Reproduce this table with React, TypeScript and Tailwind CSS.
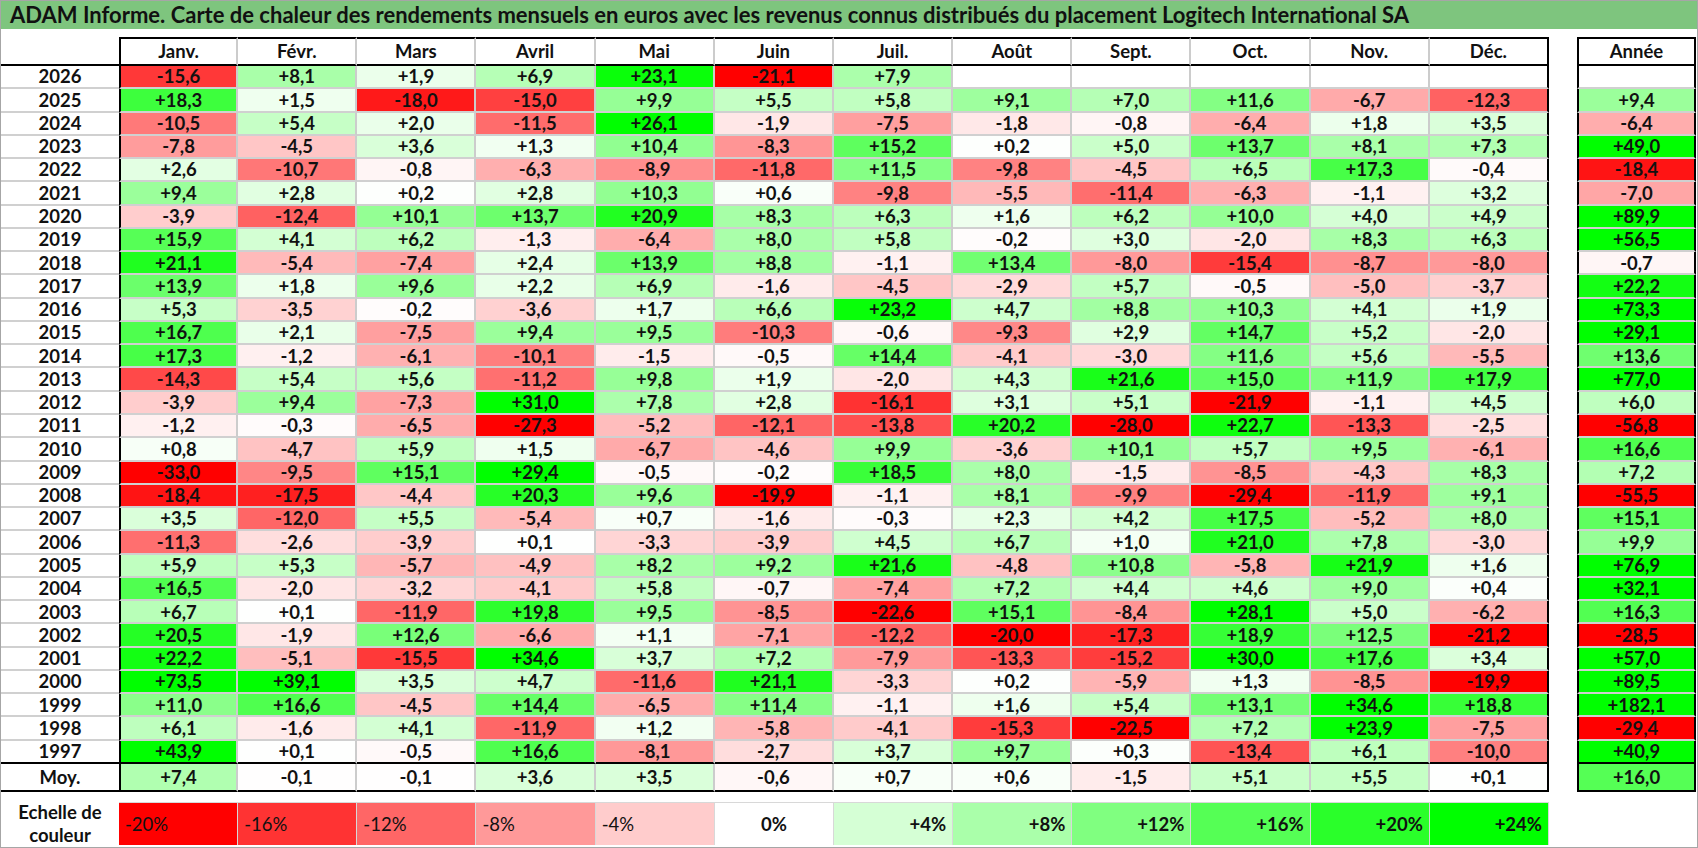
import React from "react";

const months = ["Janv.", "Févr.", "Mars", "Avril", "Mai", "Juin", "Juil.", "Août", "Sept.", "Oct.", "Nov.", "Déc."];

const raw = `2026|-15,6|+8,1|+1,9|+6,9|+23,1|-21,1|+7,9||||||
2025|+18,3|+1,5|-18,0|-15,0|+9,9|+5,5|+5,8|+9,1|+7,0|+11,6|-6,7|-12,3|+9,4
2024|-10,5|+5,4|+2,0|-11,5|+26,1|-1,9|-7,5|-1,8|-0,8|-6,4|+1,8|+3,5|-6,4
2023|-7,8|-4,5|+3,6|+1,3|+10,4|-8,3|+15,2|+0,2|+5,0|+13,7|+8,1|+7,3|+49,0
2022|+2,6|-10,7|-0,8|-6,3|-8,9|-11,8|+11,5|-9,8|-4,5|+6,5|+17,3|-0,4|-18,4
2021|+9,4|+2,8|+0,2|+2,8|+10,3|+0,6|-9,8|-5,5|-11,4|-6,3|-1,1|+3,2|-7,0
2020|-3,9|-12,4|+10,1|+13,7|+20,9|+8,3|+6,3|+1,6|+6,2|+10,0|+4,0|+4,9|+89,9
2019|+15,9|+4,1|+6,2|-1,3|-6,4|+8,0|+5,8|-0,2|+3,0|-2,0|+8,3|+6,3|+56,5
2018|+21,1|-5,4|-7,4|+2,4|+13,9|+8,8|-1,1|+13,4|-8,0|-15,4|-8,7|-8,0|-0,7
2017|+13,9|+1,8|+9,6|+2,2|+6,9|-1,6|-4,5|-2,9|+5,7|-0,5|-5,0|-3,7|+22,2
2016|+5,3|-3,5|-0,2|-3,6|+1,7|+6,6|+23,2|+4,7|+8,8|+10,3|+4,1|+1,9|+73,3
2015|+16,7|+2,1|-7,5|+9,4|+9,5|-10,3|-0,6|-9,3|+2,9|+14,7|+5,2|-2,0|+29,1
2014|+17,3|-1,2|-6,1|-10,1|-1,5|-0,5|+14,4|-4,1|-3,0|+11,6|+5,6|-5,5|+13,6
2013|-14,3|+5,4|+5,6|-11,2|+9,8|+1,9|-2,0|+4,3|+21,6|+15,0|+11,9|+17,9|+77,0
2012|-3,9|+9,4|-7,3|+31,0|+7,8|+2,8|-16,1|+3,1|+5,1|-21,9|-1,1|+4,5|+6,0
2011|-1,2|-0,3|-6,5|-27,3|-5,2|-12,1|-13,8|+20,2|-28,0|+22,7|-13,3|-2,5|-56,8
2010|+0,8|-4,7|+5,9|+1,5|-6,7|-4,6|+9,9|-3,6|+10,1|+5,7|+9,5|-6,1|+16,6
2009|-33,0|-9,5|+15,1|+29,4|-0,5|-0,2|+18,5|+8,0|-1,5|-8,5|-4,3|+8,3|+7,2
2008|-18,4|-17,5|-4,4|+20,3|+9,6|-19,9|-1,1|+8,1|-9,9|-29,4|-11,9|+9,1|-55,5
2007|+3,5|-12,0|+5,5|-5,4|+0,7|-1,6|-0,3|+2,3|+4,2|+17,5|-5,2|+8,0|+15,1
2006|-11,3|-2,6|-3,9|+0,1|-3,3|-3,9|+4,5|+6,7|+1,0|+21,0|+7,8|-3,0|+9,9
2005|+5,9|+5,3|-5,7|-4,9|+8,2|+9,2|+21,6|-4,8|+10,8|-5,8|+21,9|+1,6|+76,9
2004|+16,5|-2,0|-3,2|-4,1|+5,8|-0,7|-7,4|+7,2|+4,4|+4,6|+9,0|+0,4|+32,1
2003|+6,7|+0,1|-11,9|+19,8|+9,5|-8,5|-22,6|+15,1|-8,4|+28,1|+5,0|-6,2|+16,3
2002|+20,5|-1,9|+12,6|-6,6|+1,1|-7,1|-12,2|-20,0|-17,3|+18,9|+12,5|-21,2|-28,5
2001|+22,2|-5,1|-15,5|+34,6|+3,7|+7,2|-7,9|-13,3|-15,2|+30,0|+17,6|+3,4|+57,0
2000|+73,5|+39,1|+3,5|+4,7|-11,6|+21,1|-3,3|+0,2|-5,9|+1,3|-8,5|-19,9|+89,5
1999|+11,0|+16,6|-4,5|+14,4|-6,5|+11,4|-1,1|+1,6|+5,4|+13,1|+34,6|+18,8|+182,1
1998|+6,1|-1,6|+4,1|-11,9|+1,2|-5,8|-4,1|-15,3|-22,5|+7,2|+23,9|-7,5|-29,4
1997|+43,9|+0,1|-0,5|+16,6|-8,1|-2,7|+3,7|+9,7|+0,3|-13,4|+6,1|-10,0|+40,9
Moy.|+7,4|-0,1|-0,1|+3,6|+3,5|-0,6|+0,7|+0,6|-1,5|+5,1|+5,5|+0,1|+16,0`;

const rows = raw.split("\n").map((line) => {
  const parts = line.split("|");
  return { label: parts[0], months: parts.slice(1, 13), year: parts[13] };
});

function color(s: string): string {
  if (!s) return "#ffffff";
  const v = parseFloat(s.replace(",", "."));
  if (v < 0) {
    const t = Math.min(1, -v / 20);
    const c = Math.round(255 * (1 - t));
    return `rgb(255,${c},${c})`;
  }
  const t = Math.min(1, v / 24);
  const c = Math.round(255 * (1 - t));
  return `rgb(${c},255,${c})`;
}

const scale = ["-20%", "-16%", "-12%", "-8%", "-4%", "0%", "+4%", "+8%", "+12%", "+16%", "+20%", "+24%"];

export default function App() {
  const nData = rows.length - 1;
  return (
    <div className="w-[1698px] h-[848px] box-border border border-[#a6a6a6] bg-white overflow-hidden font-['Lato',sans-serif] font-bold text-[#111] text-[18.5px] leading-none">
      <div className="h-[28px] bg-[#7ec57e] flex items-center pl-[9px] text-[22px] whitespace-nowrap">
        ADAM Informe. Carte de chaleur des rendements mensuels en euros avec les revenus connus distribués du placement Logitech International SA
      </div>
      <div className="flex mt-[8px]">
        <div className="grid w-[1548px] h-[755px] grid-cols-[118px_repeat(12,minmax(0,1fr))] grid-rows-[29px_repeat(30,minmax(0,1fr))_28px]">
          <div className="border-b-2 border-b-black" />
          {months.map((m, i) => (
            <div
              key={m}
              className={
                "flex items-center justify-center border-t-2 border-b-2 border-t-black border-b-black " +
                (i === 0 ? "border-l-2 border-l-black " : "") +
                (i === 11 ? "border-r-2 border-r-black" : "border-r-2 border-r-[#cccccc]")
              }
            >
              {m}
            </div>
          ))}
          {rows.map((r, ri) => {
            const last = ri === nData - 1;
            const moy = ri === nData;
            const bottom = last || moy ? "border-b-2 border-b-black" : "border-b-2 border-b-[#d0d0d0]";
            return (
              <React.Fragment key={r.label}>
                <div className={"flex items-center justify-center " + bottom}>{r.label}</div>
                {r.months.map((v, i) => (
                  <div
                    key={i}
                    style={{ backgroundColor: color(v) }}
                    className={
                      "flex items-center justify-center " +
                      bottom +
                      " " +
                      (i === 0 ? "border-l-2 border-l-black " : "") +
                      (i === 11 ? "border-r-2 border-r-black" : "border-r-2 border-r-[#cccccc]")
                    }
                  >
                    {v}
                  </div>
                ))}
              </React.Fragment>
            );
          })}
        </div>
        <div className="ml-[28px] grid w-[119px] h-[755px] grid-rows-[29px_repeat(30,minmax(0,1fr))_28px]">
          <div className="flex items-center justify-center border-2 border-black">Année</div>
          {rows.map((r, ri) => {
            const last = ri === nData - 1;
            const moy = ri === nData;
            const bottom = last || moy ? "border-b-2 border-b-black" : "border-b-2 border-b-[#d0d0d0]";
            return (
              <div
                key={r.label}
                style={{ backgroundColor: color(r.year) }}
                className={"flex items-center justify-center border-l-2 border-r-2 border-l-black border-r-black " + bottom}
              >
                {r.year}
              </div>
            );
          })}
        </div>
      </div>
      <div className="flex mt-[10px] h-[43px]">
        <div className="w-[118px] flex flex-col items-center justify-center gap-[4px] leading-[19px]">
          <span>Echelle de</span>
          <span>couleur</span>
        </div>
        <div className="w-[1430px] grid grid-cols-12 border-t border-t-[#d8d8d8]">
          {scale.map((s) => {
            const v = parseFloat(s);
            const align = v < 0 ? "justify-start pl-[6px] font-normal" : v === 0 ? "justify-center" : "justify-end pr-[6px]";
            return (
              <div
                key={s}
                style={{ backgroundColor: color(s.replace("%", "")) }}
                className={"flex items-center border-r border-r-[#d8d8d8] " + align}
              >
                {s}
              </div>
            );
          })}
        </div>
      </div>
    </div>
  );
}
